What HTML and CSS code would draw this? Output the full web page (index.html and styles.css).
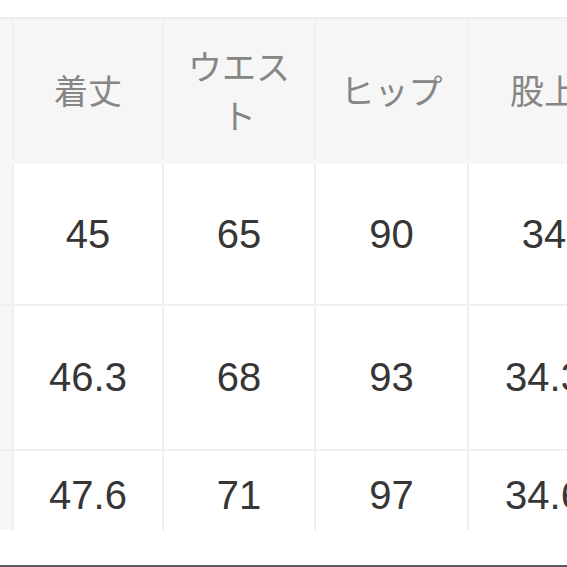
FILE: index.html
```html
<!DOCTYPE html>
<html lang="ja">
<head>
<meta charset="utf-8">
<link rel="stylesheet" href="styles.css">
</head>
<body>
<div class="page">
  <div class="table">
    <div class="row head">
      <div class="cell edge"></div>
      <div class="cell">着丈</div>
      <div class="cell">ウエスト</div>
      <div class="cell">ヒップ</div>
      <div class="cell">股上</div>
    </div>
    <div class="row body r1">
      <div class="cell edge"></div>
      <div class="cell">45</div>
      <div class="cell">65</div>
      <div class="cell">90</div>
      <div class="cell">34</div>
    </div>
    <div class="row body r2">
      <div class="cell edge"></div>
      <div class="cell">46.3</div>
      <div class="cell">68</div>
      <div class="cell">93</div>
      <div class="cell">34.3</div>
    </div>
    <div class="row body r3">
      <div class="cell edge"></div>
      <div class="cell">47.6</div>
      <div class="cell">71</div>
      <div class="cell">97</div>
      <div class="cell">34.6</div>
    </div>
  </div>
  <div class="spacer"></div>
  <div class="bottom-line"></div>
</div>
</body>
</html>
```

FILE: styles.css
```css
html, body {
  margin: 0;
  padding: 0;
  background: #ffffff;
}

.page {
  width: 567px;
  height: 567px;
  overflow: hidden;
  display: flex;
  flex-direction: column;
  padding-top: 17px;
  box-sizing: border-box;
}

.table {
  display: flex;
  flex-direction: column;
  border-top: 2px solid #ececec;
  width: 567px;
  overflow: hidden;
}

.row {
  display: grid;
  grid-template-columns: 12px 150px 152px 153px 152px;
  width: 619px;
}

.cell {
  display: flex;
  align-items: center;
  justify-content: center;
  text-align: center;
  border-left: 2px solid #efefef;
  box-sizing: border-box;
  padding: 0 10px;
}

.cell.edge {
  border-left: none;
  background: #f6f6f6;
  padding: 0;
}

.head {
  height: 145px;
  background: #f6f6f6;
  font-family: "Noto Sans CJK JP", "Noto Sans", sans-serif;
  font-size: 34px;
  line-height: 49px;
  color: #868686;
  padding-bottom: 4px;
  box-sizing: border-box;
}

.head .cell {
  border-left-color: #f0f0f0;
}

.body {
  font-family: "Liberation Sans", Arial, sans-serif;
  font-size: 40px;
  color: #363636;
  background: #ffffff;
}

.body .cell {
  background: #ffffff;
}

.body .cell.edge {
  background: #f6f6f6;
}

.r1 {
  height: 140px;
}

.r2 {
  height: 143px;
  border-top: 2px solid #f0f0f0;
}

.r3 {
  height: 79px;
  border-top: 2px solid #f0f0f0;
}

.r3 .cell {
  align-items: flex-start;
  padding-top: 22px;
}

.spacer {
  flex: 1;
}

.bottom-line {
  height: 2px;
  background: #5a5a5a;
}
```
